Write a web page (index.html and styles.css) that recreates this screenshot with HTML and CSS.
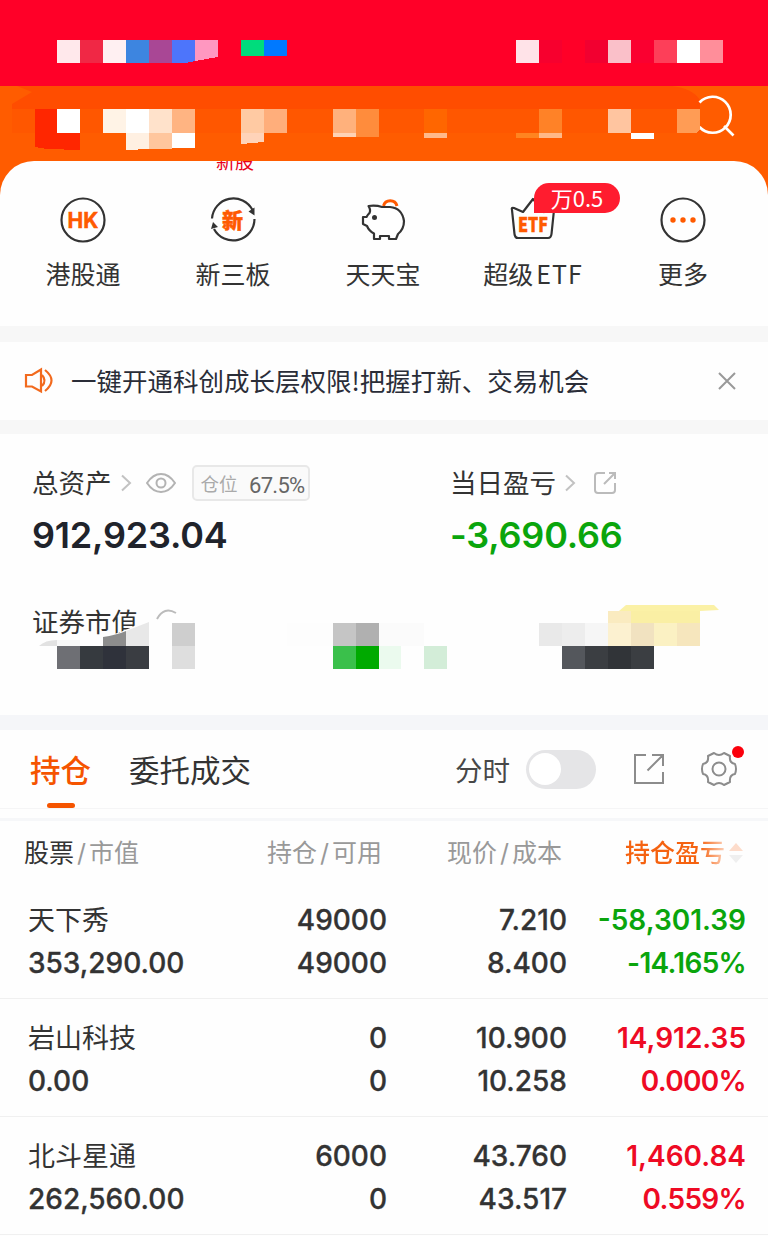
FILE: index.html
```html
<!DOCTYPE html>
<html lang="zh-CN">
<head>
  <meta charset="UTF-8" />
  <meta name="viewport" content="width=device-width, initial-scale=1.0"/>
  <title>持仓</title>
  <link rel="stylesheet" href="styles.css">
</head>
<body>

  <!-- Status bar, contents masked -->
  <header class="status-bar">
    <svg width="768" height="86" viewBox="0 0 768 86" shape-rendering="crispEdges">
      <rect x="57" y="40" width="23" height="23" fill="#ffe8eb"/>
      <rect x="80" y="40" width="23" height="23" fill="#f02845"/>
      <rect x="103" y="40" width="23" height="23" fill="#fff0f2"/>
      <rect x="126" y="40" width="23" height="23" fill="#3d85e0"/>
      <rect x="149" y="40" width="23" height="23" fill="#a94795"/>
      <path d="M172 40h23v21l-10 2h-13z" fill="#4d75fb"/>
      <path d="M195 40h23v17l-23 4z" fill="#ff97c0"/>
      <rect x="241" y="40" width="23" height="16" fill="#00dc7c"/>
      <rect x="264" y="40" width="23" height="16" fill="#0079ff"/>
      <rect x="516" y="40" width="23" height="23" fill="#ffe3e8"/>
      <rect x="539" y="40" width="23" height="23" fill="#f7002e"/>
      <rect x="585" y="40" width="23" height="23" fill="#f20030"/>
      <rect x="608" y="40" width="23" height="23" fill="#fac0c9"/>
      <rect x="631" y="40" width="23" height="23" fill="#fa0030"/>
      <rect x="654" y="40" width="23" height="23" fill="#fd3f59"/>
      <rect x="677" y="40" width="23" height="23" fill="#fff"/>
      <rect x="700" y="40" width="23" height="23" fill="#ff8e9a"/>
    </svg>
  </header>

  <!-- Nav bar, contents masked -->
  <nav class="nav-bar">
    <svg width="768" height="75" viewBox="0 86 768 75">
      <path d="M17 86H672Q692 88 700 100V109H12V104L32 92Z" fill="#ff4d00"/>
      <rect x="12" y="109" width="688" height="24" fill="#ff5700"/>
      <g fill="none" stroke="#fff" stroke-width="2.7">
        <path d="M699.5 102.500A18 18 0 1 1 699.500 127"/>
        <path d="M724 126l9.500 9.500"/>
      </g>
      <g shape-rendering="crispEdges">
        <path d="M35 109h22v24h23v17l-33-1l-12-2z" fill="#ff2600"/>
        <rect x="57" y="109" width="23" height="24" fill="#fff"/>
        <rect x="103" y="109" width="23" height="24" fill="#fff3e6"/>
        <rect x="126" y="109" width="23" height="24" fill="#fff"/>
        <rect x="149" y="109" width="23" height="24" fill="#ffe2cb"/>
        <rect x="172" y="109" width="23" height="24" fill="#ffb482"/>
        <path d="M126 133h23v16l-23 1z" fill="#fff0e2"/>
        <rect x="149" y="133" width="23" height="16" fill="#ffc69d"/>
        <rect x="172" y="133" width="23" height="15" fill="#fff"/>
        <rect x="241" y="109" width="23" height="24" fill="#ffcaa3"/>
        <path d="M241 133h23v9l-23 2z" fill="#ffd3b9"/>
        <rect x="264" y="109" width="23" height="24" fill="#ffae7b"/>
        <rect x="333" y="109" width="23" height="24" fill="#ffb17c"/>
        <rect x="333" y="133" width="23" height="4" fill="#ffd2b4"/>
        <rect x="356" y="109" width="23" height="28" fill="#ff8c3c"/>
        <rect x="424" y="109" width="23" height="24" fill="#ff6600"/>
        <rect x="424" y="133" width="23" height="5" fill="#ffb98b"/>
        <rect x="516" y="133" width="23" height="5" fill="#ff8420"/>
        <rect x="539" y="109" width="23" height="24" fill="#ff8227"/>
        <rect x="539" y="133" width="23" height="5" fill="#ffb988"/>
        <rect x="608" y="109" width="23" height="24" fill="#ffc5a0"/>
        <rect x="631" y="133" width="23" height="6" fill="#fff"/>
        <path d="M677 109h23v20l-4 4h-19z" fill="#ff9c55"/>
      </g>
    </svg>
  </nav>

  <section class="shortcuts-wrap">
    <div class="shortcuts">
      <div class="clipped"><span>新股</span></div>
      <div class="shortcut">
        <svg width="50" height="50" viewBox="0 0 50 50">
          <circle cx="25" cy="25" r="21.500" fill="none" stroke="#333" stroke-width="2.200"/>
          <text x="25" y="33" class="icon-text hk">HK</text>
        </svg>
        <span>港股通</span>
      </div>
      <div class="shortcut">
        <svg width="50" height="50" viewBox="0 0 50 50">
          <path d="M4 23.500A21.500 21.500 0 0 1 44.500 15M46.500 24A21.500 21.500 0 0 1 6 34" fill="none" stroke="#333" stroke-width="2.200"/>
          <path d="M40.500 16.500l6-4v8zM3 34l2-7l5 5z" fill="#333"/>
          <text x="24.500" y="33" class="icon-text xin">新</text>
        </svg>
        <span>新三板</span>
      </div>
      <div class="shortcut">
        <svg width="50" height="50" viewBox="0 0 50 50">
          <path d="M25.500 11A7 7 0 0 1 39 11" fill="none" stroke="#ff5a00" stroke-width="3"/>
          <path d="M24 12Q18 10 10.500 11Q13 15 11.500 18Q9.500 20 8.500 22H5V29L9 31Q11 36 16 38.500V44H22V41H31V44H38L40 39Q46 34 46 26Q44 13 32 12Z" fill="#fff" stroke="#333" stroke-width="2.200" stroke-linejoin="round"/>
          <circle cx="16.500" cy="22.500" r="2.500" fill="#333"/>
        </svg>
        <span>天天宝</span>
      </div>
      <div class="shortcut">
        <svg width="50" height="50" viewBox="0 0 50 50">
          <path d="M4 15Q3 12 6 13L15 17L25 4L36 17L44 13Q47 12 46 15L43.500 39Q43 43 40 43H10Q7 43 6.500 39Z" fill="none" stroke="#333" stroke-width="2.200" stroke-linejoin="round"/>
          <text x="25" y="37" class="icon-text etf" textLength="30" lengthAdjust="spacingAndGlyphs">ETF</text>
        </svg>
        <em class="badge">万0.5</em>
        <span>超级<small>ETF</small></span>
      </div>
      <div class="shortcut">
        <svg width="50" height="50" viewBox="0 0 50 50">
          <circle cx="25" cy="25" r="21.500" fill="none" stroke="#333" stroke-width="2.200"/>
          <g fill="#ff5a00"><circle cx="15" cy="25" r="2.700"/><circle cx="25" cy="25" r="2.700"/><circle cx="35" cy="25" r="2.700"/></g>
        </svg>
        <span>更多</span>
      </div>
    </div>
  </section>

  <section class="notice">
    <svg width="30" height="28" viewBox="0 0 30 28" fill="none" stroke="#f26a1e" stroke-width="2.200">
      <path d="M2 8H8L17 2.500V24.500L8 19.500H2Z"/>
      <path d="M18 8Q23 13.500 18 19M21 3Q34 13.500 21 24"/>
    </svg>
    <p>一键开通科创成长层权限!把握打新、交易机会</p>
    <svg class="close" width="20" height="20" viewBox="0 0 20 20" stroke="#999" stroke-width="2"><path d="M2 2L18 18M18 2L2 18"/></svg>
  </section>

  <section class="assets">
    <div class="asset">
      <div class="asset-label">
        <span>总资产</span>
        <svg class="arrow" width="12" height="18" viewBox="0 0 12 18"><path d="M2 1.500L10 9L2 16.500"/></svg>
        <svg class="eye" width="30" height="22" viewBox="0 0 30 22"><path d="M1 11Q7 2 15 2T29 11Q23 20 15 20T1 11Z"/><circle cx="15" cy="11" r="4.500"/></svg>
        <div class="position">仓位 <b>67.5%</b></div>
      </div>
      <div class="amount">912,923.04</div>
    </div>
    <div class="asset">
      <div class="asset-label">
        <span>当日盈亏</span>
        <svg class="arrow" width="12" height="18" viewBox="0 0 12 18"><path d="M2 1.500L10 9L2 16.500"/></svg>
        <svg class="share" width="24" height="24" viewBox="0 0 24 24"><path d="M12 2H5Q2 2 2 5V19Q2 22 5 22H19Q22 22 22 19V12M11 13L22 2M16 2H22V8"/></svg>
      </div>
      <div class="amount down">-3,690.66</div>
    </div>
    <div class="masked">
      <span>证券市值</span>
      <svg width="768" height="80" viewBox="0 600 768 80">
        <path d="M157 619Q164 606 176 613" fill="none" stroke="#bbb" stroke-width="2"/>
        <path d="M39 646V641Q60 636 103 637Q124 632 136 625L149 622V646Z" fill="#fefefe"/>
        <path d="M39 646Q45 640 57 640V646Z" fill="#e2e2e2"/>
        <rect x="57" y="640" width="23" height="6" fill="#f8f8f8"/>
        <path d="M103 646V637Q116 635 126 631V646Z" fill="#8d8d8d"/>
        <path d="M126 646V631L149 622V646Z" fill="#e8e8e8"/>
        <g shape-rendering="crispEdges">
          <rect x="57" y="646" width="23" height="23" fill="#6e6f74"/>
          <rect x="80" y="646" width="23" height="23" fill="#363a3f"/>
          <rect x="103" y="646" width="23" height="23" fill="#2f323b"/>
          <rect x="126" y="646" width="23" height="23" fill="#3a3d42"/>
          <rect x="172" y="623" width="23" height="23" fill="#cecece"/>
          <rect x="172" y="646" width="23" height="23" fill="#dedede"/>
          <rect x="287" y="623" width="46" height="23" fill="#fdfdfd"/>
          <rect x="333" y="623" width="23" height="23" fill="#c5c5c5"/>
          <rect x="356" y="623" width="23" height="23" fill="#b0b0b0"/>
          <rect x="379" y="623" width="45" height="23" fill="#fbfbfb"/>
          <rect x="333" y="646" width="23" height="23" fill="#3ac04b"/>
          <rect x="356" y="646" width="23" height="23" fill="#00aa00"/>
          <rect x="379" y="646" width="22" height="23" fill="#ebfaee"/>
          <rect x="424" y="646" width="23" height="23" fill="#d3edd8"/>
          <rect x="539" y="623" width="23" height="23" fill="#e9e9e9"/>
          <rect x="562" y="623" width="23" height="23" fill="#ededed"/>
          <rect x="585" y="623" width="23" height="23" fill="#f6f6f6"/>
          <rect x="608" y="611" width="23" height="12" fill="#faebc0"/>
          <rect x="631" y="611" width="69" height="12" fill="#faefa4"/>
          <rect x="608" y="623" width="23" height="23" fill="#fcf1d0"/>
          <rect x="631" y="623" width="23" height="23" fill="#f1e2c0"/>
          <rect x="654" y="623" width="23" height="23" fill="#fbf1c3"/>
          <rect x="677" y="623" width="23" height="23" fill="#f6e6bd"/>
          <rect x="562" y="646" width="23" height="23" fill="#54575c"/>
          <rect x="585" y="646" width="23" height="23" fill="#3b3e42"/>
          <rect x="608" y="646" width="23" height="23" fill="#313438"/>
          <rect x="631" y="646" width="23" height="23" fill="#3b3e42"/>
        </g>
        <path d="M619 611L626 605H714L719 610L700 611Z" fill="#fbf1a6"/>
      </svg>
    </div>
  </section>

  <section class="tabs">
    <span class="tab active">持仓</span>
    <span class="tab">委托成交</span>
    <span class="minute">分时</span>
    <i class="switch"></i>
    <svg class="export" width="32" height="32" viewBox="0 0 32 32"><path d="M13 2H2V30H30V19M19 2H30V13M14.500 17.500L30 2"/></svg>
    <div class="gear">
      <svg width="38" height="38" viewBox="0 0 38 38"><path d="M14 3Q19 7 24 3L30 6Q29 13 35 14Q37 19 35 24Q29 25 30 32L24 35Q19 31 14 35L8 32Q9 25 3 24Q1 19 3 14Q9 13 8 6Z" stroke-linejoin="round"/><circle cx="19" cy="19" r="6.500"/></svg>
      <i class="dot"></i>
    </div>
  </section>

  <!-- Holdings -->
  <table class="holdings">
    <thead>
      <tr>
        <th><b>股票</b><u>/</u>市值</th>
        <th>持仓<u>/</u>可用</th>
        <th>现价<u>/</u>成本</th>
        <th class="sorted"><span>持仓盈亏</span><svg width="14" height="22" viewBox="0 0 14 22"><path d="M0 9L7 1L14 9Z" fill="#fddccb"/><path d="M0 13L7 21L14 13Z" fill="#efefef"/></svg></th>
      </tr>
    </thead>
    <tbody>
      <tr>
        <td><span class="name">天下秀</span><br>353,290.00</td>
        <td>49000<br>49000</td>
        <td>7.210<br>8.400</td>
        <td class="down">-58,301.39<br><span class="rate">-14.165%</span></td>
      </tr>
      <tr>
        <td><span class="name">岩山科技</span><br>0.00</td>
        <td>0<br>0</td>
        <td>10.900<br>10.258</td>
        <td class="up">14,912.35<br><span class="rate">0.000%</span></td>
      </tr>
      <tr>
        <td><span class="name">北斗星通</span><br>262,560.00</td>
        <td>6000<br>0</td>
        <td>43.760<br>43.517</td>
        <td class="up">1,460.84<br><span class="rate">0.559%</span></td>
      </tr>
    </tbody>
  </table>

</body>
</html>
```
FILE: styles.css
```css
* {
  box-sizing: border-box;
}

body {
  font-family: Inter, 'Noto Sans CJK SC', sans-serif;
  background: #fefefe;
  color: #333;
  margin: 0;
  width: 768px;
  height: 1236px;
  overflow: hidden;
}

svg {
  display: block;
  flex: none;
}

/* Header */
.status-bar {
  height: 86px;
  background: #ff0028;
}

.nav-bar {
  height: 75px;
  background: #ff5c00;
}

/* Shortcuts */
.shortcuts-wrap {
  background: #ff5c00;
}

.shortcuts {
  display: grid;
  grid-template-columns: repeat(5, 1fr);
  height: 165px;
  padding: 34px 10px 0 8px;
  background: #fefefe;
  border-radius: 34px 34px 0 0;
  position: relative;
}

.clipped {
  position: absolute;
  left: 216px;
  top: 0;
  height: 14px;
  overflow: hidden;
  color: #e8001c;
  font-size: 19px;
  line-height: 20px;
}

.clipped span {
  display: block;
  margin-top: -8px;
}

.shortcut {
  display: flex;
  flex-direction: column;
  align-items: center;
  position: relative;
  font-family: 'Noto Sans CJK SC', sans-serif;
  font-size: 25px;
  line-height: 36px;
}

.shortcut span {
  margin-top: 10px;
  white-space: nowrap;
}

.shortcut small {
  margin-left: 3px;
  font-size: 25px;
  letter-spacing: 1px;
}

.icon-text {
  fill: #ff5a00;
  stroke: #ff5a00;
  stroke-width: 0.5px;
  text-anchor: middle;
  font-weight: 700;
}

.hk {
  font-family: Inter, sans-serif;
  font-size: 21px;
}

.xin {
  font-size: 21px;
  font-weight: 900;
}

.etf {
  font-size: 20px;
  font-weight: 900;
}

.badge {
  position: absolute;
  left: 76px;
  top: -12px;
  width: 86px;
  height: 30px;
  background: #ff1c2f;
  color: #fff;
  border-radius: 15px 15px 15px 0;
  font-size: 22px;
  font-style: normal;
  line-height: 28px;
  text-align: center;
}

/* Notice */
.notice {
  display: flex;
  align-items: center;
  height: 108px;
  padding: 0 31px 0 24px;
  border-top: 16px solid #f7f7f7;
  border-bottom: 14px solid #f7f7f7;
}

.notice p {
  flex: 1;
  margin: 0 0 3px 17px;
  color: #2a2d38;
  font-family: 'Noto Sans CJK SC', sans-serif;
  font-size: 25.5px;
  white-space: nowrap;
}

/* Assets */
.assets {
  display: grid;
  grid-template-columns: 418px 1fr;
  grid-template-rows: 138px 1fr;
  height: 281px;
  padding-top: 28px;
}

.asset {
  padding-left: 32px;
}

.asset-label {
  display: flex;
  align-items: center;
  height: 42px;
  font-size: 26.500px;
}

.asset-label > span {
  margin-bottom: 3px;
}

.arrow {
  margin-left: 8px;
  fill: none;
  stroke: #c2c2c2;
  stroke-width: 2;
}

.eye {
  margin-left: 14px;
  fill: none;
  stroke: #b3b3b3;
  stroke-width: 2;
}

.share {
  margin-left: 17px;
  fill: none;
  stroke: #bbb;
  stroke-width: 2;
}

.position {
  display: flex;
  align-items: center;
  justify-content: space-between;
  width: 118px;
  height: 36px;
  margin-left: 16px;
  padding: 0 3px 0 7px;
  border: 2px solid #e8e8e8;
  border-radius: 5px;
  background: #fafafa;
  color: #aaa;
  font-size: 18.5px;
}

.position b {
  color: #666;
  font-family: Roboto, sans-serif;
  font-size: 22px;
  font-weight: 400;
  letter-spacing: -0.7px;
  padding-top: 4px;
}

.amount {
  margin-top: 7px;
  color: #20232b;
  font-size: 36px;
  font-weight: 600;
  letter-spacing: -0.2px;
  line-height: 48px;
}

.down,
.amount.down {
  color: #0aa50c;
}

.up {
  color: #ee0a24;
}

.masked {
  grid-column: 1 / 3;
  position: relative;
}

.masked span {
  display: block;
  padding: 3px 0 0 32px;
  font-size: 26.500px;
  line-height: 38px;
}

.masked svg {
  position: absolute;
  left: 0;
  top: 0;
}

/* Tabs */
.tabs {
  display: flex;
  align-items: center;
  height: 94px;
  padding: 0 30px;
  border-top: 15px solid #f5f6f9;
  border-bottom: 1px solid #f5f5f6;
}

.tab {
  position: relative;
  margin-right: 38px;
  font-size: 30.500px;
}

.tab.active {
  color: #f55400;
  font-weight: 500;
}

.tab.active::after {
  content: '';
  position: absolute;
  left: 17px;
  bottom: -17px;
  width: 28px;
  height: 5px;
  border-radius: 3px;
  background: #f55400;
}

.minute {
  margin-left: auto;
  color: #484848;
  font-size: 27.500px;
}

.switch {
  width: 70px;
  height: 39px;
  margin-left: 16px;
  padding: 3px;
  border-radius: 20px;
  background: #e5e5e7;
}

.switch::before {
  content: '';
  display: block;
  width: 32px;
  height: 32px;
  border-radius: 50%;
  background: #fff;
}

.export,
.gear svg {
  fill: none;
  stroke: #8c8c8c;
  stroke-width: 2;
}

.export {
  margin-left: 37px;
}

.gear {
  position: relative;
  margin-left: 35px;
}

.dot {
  position: absolute;
  top: -4px;
  right: -6px;
  width: 12px;
  height: 12px;
  border-radius: 50%;
  background: #fb000c;
}

/* Holdings table */
.holdings {
  width: 768px;
  margin-top: 9px;
  border-top: 3px solid #f6f7f9;
  border-spacing: 0;
  table-layout: fixed;
}

.holdings th {
  height: 60px;
  padding: 0 26px 0 0;
  color: #999;
  font-size: 25px;
  font-weight: 400;
  text-align: right;
  white-space: nowrap;
}

.holdings th:first-child {
  width: 230px;
  padding-left: 24px;
  text-align: left;
}

.holdings th:nth-child(2) {
  width: 178px;
}

.holdings th:nth-child(3) {
  width: 180px;
}

.holdings th b {
  color: #333;
  font-weight: 400;
}

.holdings th u {
  padding: 0 3px;
  text-decoration: none;
}

.holdings .sorted svg {
  display: inline-block;
  margin-left: 4px;
  vertical-align: -2px;
}

.holdings .sorted {
  padding-right: 25px;
  font-weight: 500;
}

.sorted span {
  background: linear-gradient(90deg, #f56210 75%, #fcd0b8);
  background-clip: text;
  color: transparent;
}

.holdings td {
  height: 118px;
  padding: 5px 21px 0 0;
  border-bottom: 1px solid #f0f0f0;
  font-size: 28px;
  font-weight: 500;
  line-height: 43.500px;
  text-align: right;
  white-space: nowrap;
  -webkit-text-stroke: 0.3px;
}

.holdings td:first-child {
  padding-left: 28px;
  text-align: left;
}

.holdings td:last-child {
  padding-right: 22px;
  font-weight: 600;
  -webkit-text-stroke: 0;
}

.holdings .name {
  font-size: 27px;
  font-weight: 400;
  -webkit-text-stroke: 0;
}

.rate {
  letter-spacing: -0.7px;
}
```
